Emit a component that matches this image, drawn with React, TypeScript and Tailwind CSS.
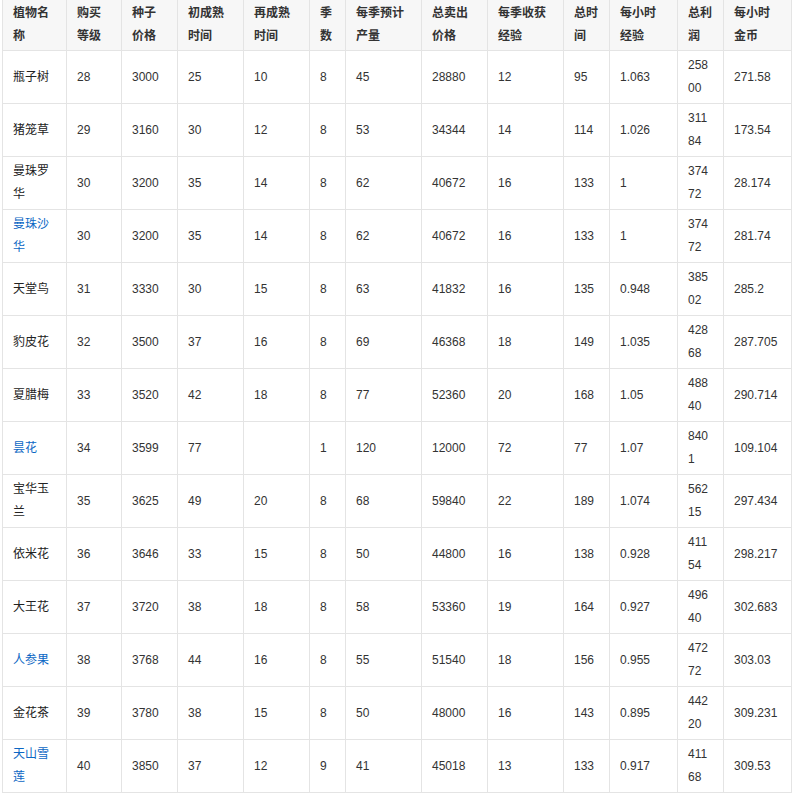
import React from "react";

const widths = [64, 55, 56, 66, 66, 36, 76, 66, 76, 46, 68, 46, 68];

const headers = [
  "植物名称",
  "购买等级",
  "种子价格",
  "初成熟时间",
  "再成熟时间",
  "季数",
  "每季预计产量",
  "总卖出价格",
  "每季收获经验",
  "总时间",
  "每小时经验",
  "总利润",
  "每小时金币",
];

type Row = { name: string; link?: boolean; v: string[] };

const rows: Row[] = [
  { name: "瓶子树", v: ["28", "3000", "25", "10", "8", "45", "28880", "12", "95", "1.063", "25800", "271.58"] },
  { name: "猪笼草", v: ["29", "3160", "30", "12", "8", "53", "34344", "14", "114", "1.026", "31184", "173.54"] },
  { name: "曼珠罗华", v: ["30", "3200", "35", "14", "8", "62", "40672", "16", "133", "1", "37472", "28.174"] },
  { name: "曼珠沙华", link: true, v: ["30", "3200", "35", "14", "8", "62", "40672", "16", "133", "1", "37472", "281.74"] },
  { name: "天堂鸟", v: ["31", "3330", "30", "15", "8", "63", "41832", "16", "135", "0.948", "38502", "285.2"] },
  { name: "豹皮花", v: ["32", "3500", "37", "16", "8", "69", "46368", "18", "149", "1.035", "42868", "287.705"] },
  { name: "夏腊梅", v: ["33", "3520", "42", "18", "8", "77", "52360", "20", "168", "1.05", "48840", "290.714"] },
  { name: "昙花", link: true, v: ["34", "3599", "77", "", "1", "120", "12000", "72", "77", "1.07", "8401", "109.104"] },
  { name: "宝华玉兰", v: ["35", "3625", "49", "20", "8", "68", "59840", "22", "189", "1.074", "56215", "297.434"] },
  { name: "依米花", v: ["36", "3646", "33", "15", "8", "50", "44800", "16", "138", "0.928", "41154", "298.217"] },
  { name: "大王花", v: ["37", "3720", "38", "18", "8", "58", "53360", "19", "164", "0.927", "49640", "302.683"] },
  { name: "人参果", link: true, v: ["38", "3768", "44", "16", "8", "55", "51540", "18", "156", "0.955", "47272", "303.03"] },
  { name: "金花茶", v: ["39", "3780", "38", "15", "8", "50", "48000", "16", "143", "0.895", "44220", "309.231"] },
  { name: "天山雪莲", link: true, v: ["40", "3850", "37", "12", "9", "41", "45018", "13", "133", "0.917", "41168", "309.53"] },
];

export default function App() {
  return (
    <div
      className="bg-white text-[12px] leading-[23px] text-[#333]"
      style={{ fontFamily: '"Liberation Sans", Arial, "Noto Sans CJK SC", sans-serif' }}
    >
      <div
        className="ml-[2px] grid w-[790px] border-l border-[#e4e4e4]"
        style={{ gridTemplateColumns: widths.map((w) => `${w}px`).join(" ") }}
      >
        {headers.map((h, i) => (
          <div
            key={"h" + i}
            className="flex h-[51px] items-center border-b border-r border-[#e4e4e4] bg-[#f7f7f7] px-[10px] font-bold"
          >
            <div className="min-w-0 break-all">{h}</div>
          </div>
        ))}
        {rows.map((r, ri) => (
          <React.Fragment key={"r" + ri}>
            <div className="flex h-[53px] items-center border-b border-r border-[#e4e4e4] px-[10px]">
              <div className={"min-w-0 break-all " + (r.link ? "text-[#0b67c4]" : "text-[#222]")}>{r.name}</div>
            </div>
            {r.v.map((c, ci) => (
              <div
                key={ci}
                className="flex h-[53px] items-center border-b border-r border-[#e4e4e4] px-[10px]"
              >
                <div className="min-w-0 break-all">{c}</div>
              </div>
            ))}
          </React.Fragment>
        ))}
      </div>
    </div>
  );
}
